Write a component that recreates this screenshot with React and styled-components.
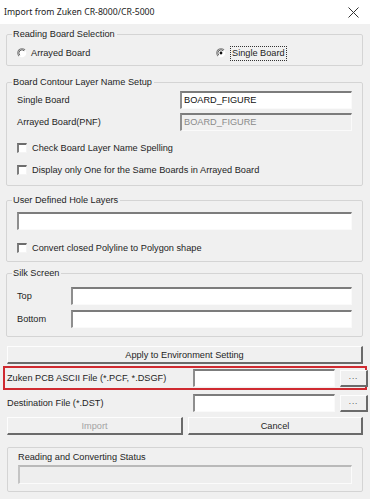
import React from "react";
import styled, { createGlobalStyle } from "styled-components";

const GlobalStyle = createGlobalStyle`
  html, body {
    margin: 0;
    padding: 0;
    background: #f0f0f0;
  }
  body {
    font-family: "Liberation Sans", Tahoma, Arial, sans-serif;
    font-size: 9.2px;
    color: #1e1e1e;
  }
`;

const Dialog = styled.div`
  width: 370px;
  height: 499px;
  background: #f0f0f0;
  overflow: hidden;
`;

const TitleBar = styled.div`
  height: 24px;
  background: #fff;
  display: flex;
  align-items: center;
  justify-content: space-between;
  padding: 0 11px 0 4px;
  font-family: "Noto Sans", "Liberation Sans", sans-serif;
  font-size: 8.7px;
  color: #222;
`;

const Body = styled.div`
  padding: 0 7px 0 6px;
  display: flex;
  flex-direction: column;
`;

const Group = styled.fieldset`
  margin: ${(p) => p.$mt}px 0 0;
  padding: ${(p) => p.$pt}px 10px ${(p) => p.$pb}px;
  border: 1px solid #d4d4d4;
  border-radius: 2px;
  min-width: 0;
  display: flex;
  flex-direction: column;
  gap: ${(p) => p.$gap || 0}px;

  legend {
    margin-left: -5px;
    padding: 0 2px 0 1px;
    line-height: 13px;
  }
`;

const RadioRow = styled.div`
  display: grid;
  grid-template-columns: 199px 1fr;
  height: 14px;
  align-items: center;
`;

const Choice = styled.label`
  display: flex;
  align-items: center;
  height: ${(p) => p.$h || 13}px;
  margin-top: ${(p) => p.$mt || 0}px;
  white-space: nowrap;
`;

const Focus = styled.span`
  outline: 1px dotted #333;
  padding: 0 1px;
  margin-left: 1px;
  line-height: 13px;
`;

const FieldRow = styled.div`
  display: grid;
  grid-template-columns: ${(p) => p.$label}px 1fr;
  align-items: center;
  margin-top: ${(p) => p.$mt || 0}px;
`;

const TextBox = styled.div`
  height: 18px;
  box-sizing: border-box;
  border-top: 2px solid #7c7c7c;
  border-left: 2px solid #8e8e8e;
  border-right: 1px solid #fafafa;
  border-bottom: 1px solid #fafafa;
  background: ${(p) => (p.$disabled ? "#f0f0f0" : "#fff")};
  color: ${(p) => (p.$disabled ? "#8a8a8a" : "#111")};
  padding: 0 2px;
  line-height: 15px;
  white-space: nowrap;
  overflow: hidden;
`;

const Check = styled.span`
  width: 10px;
  height: 10px;
  box-sizing: border-box;
  border-top: 2px solid #6d6d6d;
  border-left: 2px solid #7d7d7d;
  border-right: 1px solid #f4f4f4;
  border-bottom: 1px solid #f4f4f4;
  background: #fff;
  margin: 0 5px 0 0;
  flex: none;
`;

const Button = styled.div`
  height: ${(p) => p.$h || 18}px;
  box-sizing: border-box;
  border-top: 1px solid #fdfdfd;
  border-left: 1px solid #fdfdfd;
  border-right: 2px solid #6a6a6a;
  border-bottom: 2px solid #6a6a6a;
  background: #f0f0f0;
  display: flex;
  align-items: center;
  justify-content: center;
  color: ${(p) => (p.$disabled ? "#a3a3a3" : "#1e1e1e")};
  margin-top: ${(p) => p.$mt || 0}px;
  margin-left: ${(p) => p.$ml || 0}px;
`;

const FileRow = styled.div`
  display: grid;
  grid-template-columns: 181px 142px 28px;
  column-gap: 5px;
  align-items: center;
  height: ${(p) => p.$h}px;
  margin-top: ${(p) => p.$mt || 0}px;
  padding-left: 1px;
`;

const Highlight = styled.div`
  margin: 2px -4px 0 -3px;
  border: 2px solid #cf2a30;
  padding: 0 2px 0 2px;
  height: 20px;
  display: grid;
  grid-template-columns: 181px 142px 28px;
  column-gap: 5px;
  align-items: center;
`;

const Dots = styled(Button)`
  height: 17px;
  font-size: 8px;
  letter-spacing: 1px;
  padding-bottom: 2px;
`;

const ActionRow = styled.div`
  display: grid;
  grid-template-columns: 176px 1fr;
  column-gap: 5px;
  margin-top: 6px;
  padding-left: 1px;
`;

const StatusBox = styled.div`
  margin: 12px 0 0 1px;
  height: 45px;
  box-sizing: border-box;
  border: 1px solid #d4d4d4;
  border-radius: 2px;
  padding: 4px 10px 0;
  display: flex;
  flex-direction: column;
  gap: 3px;
`;

const Progress = styled.div`
  height: 19px;
  box-sizing: border-box;
  border-top: 2px solid #b9b9b9;
  border-left: 2px solid #c4c4c4;
  border-right: 1px solid #fbfbfb;
  border-bottom: 1px solid #fbfbfb;
  background: #eeeeee;
`;

function Radio({ checked }) {
  return (
    <svg width="10" height="10" viewBox="0 0 10 10" style={{ flex: "none", marginRight: 4 }}>
      <circle cx="5" cy="5" r="4.3" fill="#fff" />
      <path d="M8 2 A4.2 4.2 0 0 0 2 8" fill="none" stroke="#7a7a7a" strokeWidth="1.1" />
      <path d="M7.2 2.8 A3.1 3.1 0 0 0 2.8 7.2" fill="none" stroke="#3a3a3a" strokeWidth="0.8" />
      {checked && <circle cx="5" cy="5" r="1.4" fill="#111" />}
    </svg>
  );
}

function CloseIcon() {
  return (
    <svg width="11" height="11" viewBox="0 0 11 11">
      <path d="M0.5 0.5 L10.5 10.5 M10.5 0.5 L0.5 10.5" stroke="#333" strokeWidth="1" />
    </svg>
  );
}

export default function App() {
  return (
    <Dialog>
      <GlobalStyle />
      <TitleBar>
        <span>Import from Zuken CR-8000/CR-5000</span>
        <CloseIcon />
      </TitleBar>
      <Body>
        <Group $mt={4} $pt={5} $pb={5}>
          <legend>Reading Board Selection</legend>
          <RadioRow>
            <Choice $h={14}>
              <Radio />
              Arrayed Board
            </Choice>
            <Choice $h={14}>
              <Radio checked />
              <Focus>Single Board</Focus>
            </Choice>
          </RadioRow>
        </Group>

        <Group $mt={10} $pt={2} $pb={9}>
          <legend>Board Contour Layer Name Setup</legend>
          <FieldRow $label={163}>
            <span>Single Board</span>
            <TextBox>BOARD_FIGURE</TextBox>
          </FieldRow>
          <FieldRow $label={163} $mt={4}>
            <span>Arrayed Board(PNF)</span>
            <TextBox $disabled>BOARD_FIGURE</TextBox>
          </FieldRow>
          <Choice $mt={10}>
            <Check />
            Check Board Layer Name Spelling
          </Choice>
          <Choice $mt={9}>
            <Check />
            Display only One for the Same Boards in Arrayed Board
          </Choice>
        </Group>

        <Group $mt={8} $pt={5} $pb={7}>
          <legend>User Defined Hole Layers</legend>
          <TextBox />
          <Choice $mt={11}>
            <Check />
            Convert closed Polyline to Polygon shape
          </Choice>
        </Group>

        <Group $mt={5} $pt={7} $pb={8} $gap={5}>
          <legend>Silk Screen</legend>
          <FieldRow $label={54}>
            <span>Top</span>
            <TextBox />
          </FieldRow>
          <FieldRow $label={54}>
            <span>Bottom</span>
            <TextBox />
          </FieldRow>
        </Group>

        <Button $mt={9} $ml={1}>
          Apply to Environment Setting
        </Button>

        <Highlight>
          <span>Zuken PCB ASCII File (*.PCF, *.DSGF)</span>
          <TextBox />
          <Dots>...</Dots>
        </Highlight>

        <FileRow $h={17} $mt={4}>
          <span>Destination File (*.DST)</span>
          <TextBox />
          <Dots>...</Dots>
        </FileRow>

        <ActionRow>
          <Button $disabled>Import</Button>
          <Button>Cancel</Button>
        </ActionRow>

        <StatusBox>
          <span>Reading and Converting Status</span>
          <Progress />
        </StatusBox>
      </Body>
    </Dialog>
  );
}
